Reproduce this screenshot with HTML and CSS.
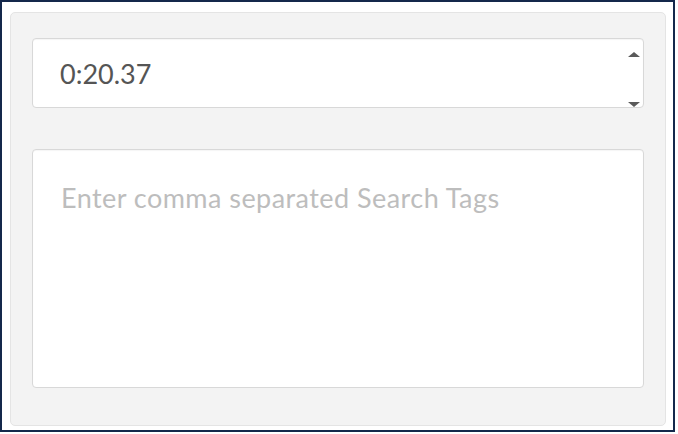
FILE: index.html
```html
<!DOCTYPE html>
<html lang="en">
<head>
<meta charset="utf-8">
<title>Clip details</title>
<link rel="stylesheet" href="styles.css">
</head>
<body>
<div class="frame">
  <div class="panel">
    <div class="time-field">
      <span class="time-value">0:20.37</span>
      <span class="spinner">
        <span class="arrow arrow-up"></span>
        <span class="arrow arrow-down"></span>
      </span>
    </div>
    <div class="tags-field">
      <span class="placeholder">Enter comma separated Search Tags</span>
    </div>
  </div>
</div>
</body>
</html>
```
FILE: styles.css
```css
html, body {
  margin: 0;
  padding: 0;
  background: #ffffff;
}

body {
  font-family: Lato, "Open Sans", sans-serif;
}

.frame {
  box-sizing: border-box;
  width: 675px;
  height: 432px;
  border: 2px solid #14284b;
  background: #ffffff;
  padding: 10px 7px 4px 8px;
}

.panel {
  box-sizing: border-box;
  height: 100%;
  background: #f3f3f3;
  border: 1px solid #e4e4e4;
  border-radius: 5px;
  padding: 25px 21px 0 21px;
  display: flex;
  flex-direction: column;
  gap: 41px;
}

.time-field {
  box-sizing: border-box;
  height: 70px;
  background: #ffffff;
  border: 1px solid #d8d8d8;
  border-radius: 4px;
  box-shadow: inset 0 1px 1px rgba(0, 0, 0, 0.04);
  display: flex;
  align-items: stretch;
  justify-content: space-between;
  padding: 0 3px 0 27px;
}

.time-value {
  align-self: center;
  font-size: 27px;
  color: #555555;
  line-height: 32px;
  padding-top: 1px;
}

.spinner {
  display: flex;
  flex-direction: column;
  justify-content: space-between;
  padding: 13px 0 0 0;
}

.arrow {
  width: 0;
  height: 0;
  border-left: 6px solid transparent;
  border-right: 6px solid transparent;
}

.arrow-up {
  border-bottom: 5px solid #5a5a5a;
}

.arrow-down {
  border-top: 5px solid #5a5a5a;
}

.tags-field {
  box-sizing: border-box;
  height: 239px;
  background: #ffffff;
  border: 1px solid #d8d8d8;
  border-radius: 4px;
  box-shadow: inset 0 1px 1px rgba(0, 0, 0, 0.04);
  padding: 31px 20px 0 28px;
}

.placeholder {
  display: block;
  font-size: 27px;
  letter-spacing: 0.45px;
  line-height: normal;
  color: #bdbdbd;
}
```
